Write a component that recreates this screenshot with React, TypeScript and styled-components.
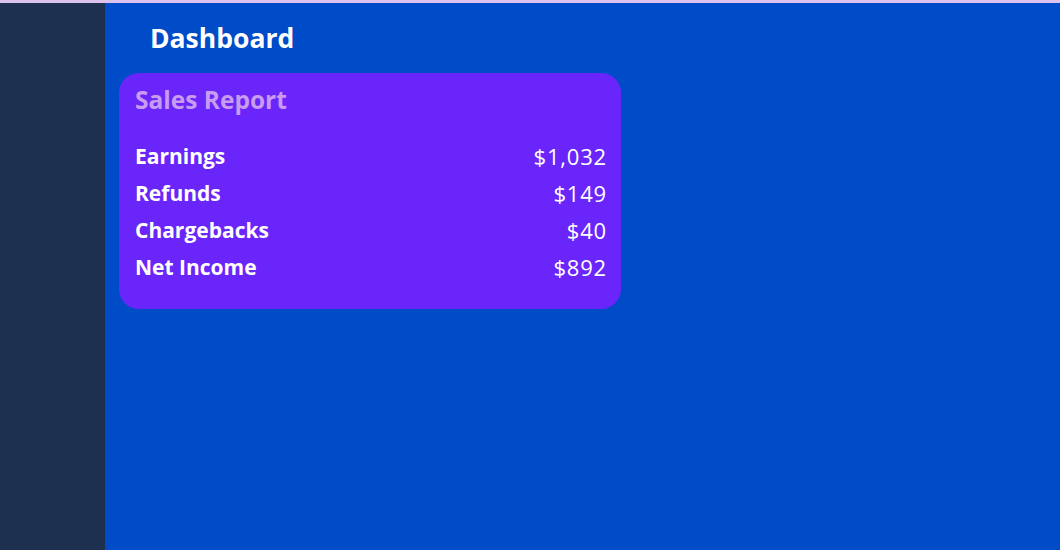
import React from "react";
import styled, { createGlobalStyle } from "styled-components";

const Global = createGlobalStyle`
  html, body { margin: 0; padding: 0; background: #0049c6; }
  body { font-family: "Open Sans", "Noto Sans", sans-serif; }
  * { box-sizing: border-box; }
`;

const Page = styled.div`
  width: 1060px;
  height: 550px;
  display: flex;
  flex-direction: column;
  overflow: hidden;
`;

const TopLine = styled.div`
  height: 3px;
  flex: none;
  background: #dcc4ee;
`;

const Body = styled.div`
  flex: 1;
  display: flex;
`;

const Sidebar = styled.aside`
  width: 105px;
  flex: none;
  background: #1e304f;
`;

const Main = styled.main`
  flex: 1;
  background: #004bc7;
  padding: 15px 14px 0 14px;
`;

const Title = styled.h1`
  margin: 0 0 15px 31px;
  font-size: 26.5px;
  font-weight: 700;
  color: #ffffff;
  line-height: 40px;
`;

const Card = styled.section`
  width: 502px;
  background: #6a25fb;
  border-radius: 20px;
  padding: 12px 14px 24px 16px;
`;

const CardTitle = styled.h2`
  margin: 0 0 22px 0;
  font-size: 24.5px;
  font-weight: 700;
  color: #c79cf1;
  line-height: 30px;
`;

const Row = styled.div`
  display: flex;
  justify-content: space-between;
  align-items: center;
  height: 37px;
  color: #ffffff;
`;

const Label = styled.span`
  font-size: 21px;
  font-weight: 700;
`;

const Value = styled.span`
  font-size: 22px;
  font-weight: 400;
  letter-spacing: 0.8px;
`;

const rows = [
  ["Earnings", "$1,032"],
  ["Refunds", "$149"],
  ["Chargebacks", "$40"],
  ["Net Income", "$892"],
];

export default function App() {
  return (
    <Page>
      <Global />
      <TopLine />
      <Body>
        <Sidebar />
        <Main>
          <Title>Dashboard</Title>
          <Card>
            <CardTitle>Sales Report</CardTitle>
            {rows.map(([l, v]) => (
              <Row key={l}>
                <Label>{l}</Label>
                <Value>{v}</Value>
              </Row>
            ))}
          </Card>
        </Main>
      </Body>
    </Page>
  );
}
